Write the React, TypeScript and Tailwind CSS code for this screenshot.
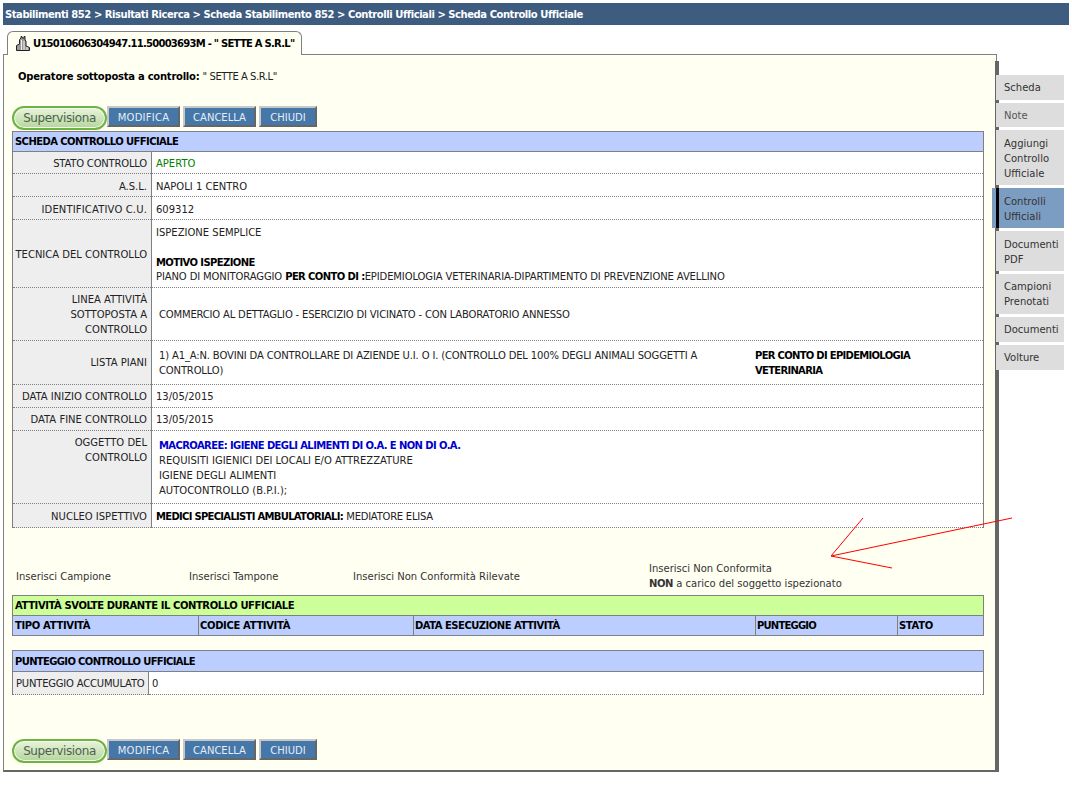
import React from "react";

const font = { fontFamily: '"DejaVu Sans", Verdana, sans-serif' };

function Buttons({ className = "" }: { className?: string }) {
  const btn =
    "h-[21px] border-2 border-t-[#c8c8c8] border-l-[#c8c8c8] border-r-[#666666] border-b-[#666666] bg-[#4577a8] pt-[2px] text-[10px] leading-none text-[#e8eef5]";
  return (
    <div className={`flex items-start ${className}`}>
      <button className="h-[24px] w-[95px] rounded-full border-2 border-[#6fb342] bg-gradient-to-b from-[#e8f4dc] to-[#b5d69c] text-[12px] leading-none tracking-[-0.4px] text-[#4f5f4f] shadow-[inset_0_0_0_1px_#f4faee]">
        Supervisiona
      </button>
      <button className={`${btn} w-[73px] tracking-[0.25px]`}>MODIFICA</button>
      <button className={`${btn} ml-[3px] w-[73px]`}>CANCELLA</button>
      <button className={`${btn} ml-[3px] w-[58px]`}>CHIUDI</button>
    </div>
  );
}

function Row({
  label,
  h,
  children,
}: {
  label: React.ReactNode;
  h: string;
  children: React.ReactNode;
}) {
  return (
    <tr className={`${h} border-b border-dotted border-[#808080]`}>
      <td className="whitespace-nowrap border-r border-solid border-[#808080] bg-[#eeeeee] py-0 pl-0 pr-1 text-right align-middle">
        {label}
      </td>
      <td className="bg-white px-1 align-middle">{children}</td>
    </tr>
  );
}

function SideTab({
  h,
  active,
  children,
}: {
  h: string;
  active?: boolean;
  children: React.ReactNode;
}) {
  return active ? (
    <div className={`relative -ml-[7px] mb-[3px] w-[72px] ${h} bg-[#7c9dc2] py-[6px] pl-[12px] leading-[15px]`}>
      <span className="absolute left-[4px] top-0 h-full w-[3px] bg-black" />
      {children}
    </div>
  ) : (
    <div className={`-ml-[3px] mb-[3px] w-[68px] ${h} bg-[#dddddd] py-[5px] pl-[8px] leading-[15px]`}>
      {children}
    </div>
  );
}

export default function App() {
  return (
    <div style={font} className="relative h-[786px] w-[1072px] overflow-hidden bg-white pt-[3px] text-[10px] text-[#222222]">
      <div className="ml-[3px] mr-[3px] flex h-[22px] items-center bg-[#3e5c80] pl-[2px] text-[10px] font-bold tracking-[-0.45px] text-white">
        Stabilimenti 852 &gt; Risultati Ricerca &gt; Scheda Stabilimento 852 &gt; Controlli Ufficiali &gt; Scheda Controllo Ufficiale
      </div>

      <div className="relative z-10 ml-[7px] mt-[6px] -mb-px flex h-[24px] w-[295px] items-center whitespace-nowrap rounded-t-[6px] border border-b-0 border-[#808080] bg-[#fffff2] pl-[7px] font-bold tracking-[-0.74px] text-black">
        <svg width="16" height="16" viewBox="0 0 16 16" className="mr-[2px] shrink-0">
          <path d="M1.5 14.5V9.5L4.5 8V3.5L6 2V.5h1V2H9V.5h1V4l1 1v5l3.5 1.5v3z" fill="#9a9a9a" stroke="#222" strokeWidth="1" />
          <path d="M6.5 4v10M9 5v9M12 11v3" stroke="#f0f0f0" strokeWidth="1" />
        </svg>
        U15010606304947.11.50003693M - " SETTE A S.R.L"
      </div>

      <div className="ml-[3px] flex items-start">
        <div className="h-[718px] w-[994px] shrink-0 border border-b-2 border-[#808080] border-b-[#666666] bg-[#fffff2] pl-[8px]">
          <div className="ml-[6px] pt-[14px] text-black">
            <b className="tracking-[-0.25px]">Operatore sottoposta a controllo:</b> <span className="tracking-[-0.45px] text-[#222222]">" SETTE A S.R.L"</span>
          </div>
          <Buttons className="mt-[22px]" />

          <table className="mt-px w-[972px] table-fixed border-collapse border-x border-[#808080]">
            <colgroup>
              <col className="w-[139px]" />
              <col />
            </colgroup>
            <thead>
              <tr className="h-[20px] border-y border-[#808080] bg-[#bbceff] text-left text-black">
                <th colSpan={2} className="pl-[2px] font-bold tracking-[-0.58px]">SCHEDA CONTROLLO UFFICIALE</th>
              </tr>
            </thead>
            <tbody>
              <Row label={<span className="block pt-px tracking-[-0.2px]">STATO CONTROLLO</span>} h="h-[22px]"><span className="block pt-px text-[#008000]">APERTO</span></Row>
              <Row label={<span className="block pt-[2px]">A.S.L.</span>} h="h-[23px]"><span className="block pt-[2px]">NAPOLI 1 CENTRO</span></Row>
              <Row label={<span className="block pt-[2px] tracking-[0.15px]">IDENTIFICATIVO C.U.</span>} h="h-[23px]"><span className="block pt-[2px]">609312</span></Row>
              <Row label={<span className="block pt-[2px]">TECNICA DEL CONTROLLO</span>} h="h-[68px]">
                <div className="pt-[2px] leading-[15px]">
                  ISPEZIONE SEMPLICE
                  <br />
                  <br />
                  <b className="tracking-[-0.6px] text-black">MOTIVO ISPEZIONE</b>
                  <span className="-mt-px block">
                    <span className="tracking-[-0.12px]">PIANO DI MONITORAGGIO </span><b className="tracking-[-0.6px] text-black">PER CONTO DI :</b><span className="tracking-[-0.12px]">EPIDEMIOLOGIA VETERINARIA-DIPARTIMENTO DI PREVENZIONE AVELLINO</span>
                  </span>
                </div>
              </Row>
              <Row label={<span className="block leading-[15px]">LINEA ATTIVITÀ<br />SOTTOPOSTA A<br />CONTROLLO</span>} h="h-[53px]">
                <span className="pl-[3px] tracking-[-0.18px]">COMMERCIO AL DETTAGLIO - ESERCIZIO DI VICINATO - CON LABORATORIO ANNESSO</span>
              </Row>
              <Row label="LISTA PIANI" h="h-[44px]">
                <div className="flex leading-[15px]">
                  <div className="w-[599px] pr-[50px] pl-[3px] tracking-[-0.15px]">
                    1) A1_A:N. BOVINI DA CONTROLLARE DI AZIENDE U.I. O I. (CONTROLLO DEL 100% DEGLI ANIMALI SOGGETTI A CONTROLLO)
                  </div>
                  <b className="w-[190px] tracking-[-0.7px] text-black">PER CONTO DI EPIDEMIOLOGIA VETERINARIA</b>
                </div>
              </Row>
              <Row label="DATA INIZIO CONTROLLO" h="h-[23px]">13/05/2015</Row>
              <Row label="DATA FINE CONTROLLO" h="h-[23px]">13/05/2015</Row>
              <tr className="h-[73px] border-b border-dotted border-[#808080]">
                <td className="border-r border-solid border-[#808080] bg-[#eeeeee] pl-1 pr-1 pt-[4px] text-right align-top leading-[15px]">
                  OGGETTO DEL<br />CONTROLLO
                </td>
                <td className="bg-white pl-[7px] pt-[7px] align-top leading-[15px]">
                  <b className="tracking-[-0.6px] text-[#0000cc]">MACROAREE: IGIENE DEGLI ALIMENTI DI O.A. E NON DI O.A.</b>
                  <br />
                  REQUISITI IGIENICI DEI LOCALI E/O ATTREZZATURE
                  <br />
                  IGIENE DEGLI ALIMENTI
                  <br />
                  AUTOCONTROLLO (B.P.I.);
                </td>
              </tr>
              <Row label={<span className="block pt-px">NUCLEO ISPETTIVO</span>} h="h-[24px]">
                <span className="block pt-px">
                  <b className="tracking-[-0.7px] text-black">MEDICI SPECIALISTI AMBULATORIALI:</b> <span className="tracking-[-0.25px]">MEDIATORE ELISA</span>
                </span>
              </Row>
            </tbody>
          </table>

          <div className="mt-[31px] flex h-[35px] items-center text-[#333333]">
            <span className="ml-[4px] w-[173px]">Inserisci Campione</span>
            <span className="w-[164px]">Inserisci Tampone</span>
            <span className="w-[296px]">Inserisci Non Conformità Rilevate</span>
            <span className="pb-[2px] leading-[15px]">
              Inserisci Non Conformita
              <br />
              <b className="tracking-[-0.4px]">NON</b> a carico del soggetto ispezionato
            </span>
          </div>

          <table className="mt-px w-[972px] table-fixed border-collapse border border-[#808080] font-bold text-black">
            <colgroup>
              <col className="w-[186px]" />
              <col className="w-[215px]" />
              <col className="w-[342px]" />
              <col className="w-[142px]" />
              <col />
            </colgroup>
            <tbody>
              <tr className="h-[20px] border-b border-[#808080] bg-[#ccff99]">
                <td colSpan={5} className="pl-[2px] tracking-[-0.42px]">ATTIVITÀ SVOLTE DURANTE IL CONTROLLO UFFICIALE</td>
              </tr>
              <tr className="h-[20px] bg-[#bbceff] tracking-[-0.35px]">
                <td className="border-r border-[#808080] pl-[2px]">TIPO ATTIVITÀ</td>
                <td className="border-r border-[#808080] pl-[1px]">CODICE ATTIVITÀ</td>
                <td className="border-r border-[#808080] pl-[1px] tracking-[-0.5px]">DATA ESECUZIONE ATTIVITÀ</td>
                <td className="border-r border-[#808080] pl-[1px] tracking-[-0.8px]">PUNTEGGIO</td>
                <td className="pl-[1px]">STATO</td>
              </tr>
            </tbody>
          </table>

          <table className="mt-[14px] w-[972px] table-fixed border-collapse border-x border-[#808080]">
            <colgroup>
              <col className="w-[136px]" />
              <col />
            </colgroup>
            <tbody>
              <tr className="h-[21px] border-y border-[#808080] bg-[#bbceff] font-bold text-black">
                <td colSpan={2} className="pl-[2px] tracking-[-0.65px]">PUNTEGGIO CONTROLLO UFFICIALE</td>
              </tr>
              <tr className="h-[23px] border-b border-dotted border-[#808080]">
                <td className="whitespace-nowrap border-r border-solid border-[#808080] bg-[#eeeeee] pl-[3px] tracking-[-0.2px]">PUNTEGGIO ACCUMULATO</td>
                <td className="bg-white pl-[3px]">0</td>
              </tr>
            </tbody>
          </table>

          <Buttons className="mt-[44px]" />
        </div>

        <div className="-ml-[2px] mt-[7px] h-[711px] w-[73px] border-l-4 border-[#666666] pt-[14px] text-[#333333]">
          <SideTab h="h-[25px]">Scheda</SideTab>
          <SideTab h="h-[24px]"><span className="text-[#555555]">Note</span></SideTab>
          <SideTab h="h-[55px] pt-[6px]">Aggiungi<br />Controllo<br />Ufficiale</SideTab>
          <SideTab h="h-[40px]" active>Controlli<br />Ufficiali</SideTab>
          <SideTab h="h-[40px] pt-[6px]">Documenti<br />PDF</SideTab>
          <SideTab h="h-[40px]">Campioni<br />Prenotati</SideTab>
          <SideTab h="h-[25px]">Documenti</SideTab>
          <SideTab h="h-[25px]">Volture</SideTab>
        </div>
      </div>

      <svg className="pointer-events-none absolute left-0 top-0 z-20" width="1072" height="786">
        <path d="M863 518L831 556M1012 518L831 556L892 568" fill="none" stroke="#ff0000" strokeWidth="1" />
      </svg>
    </div>
  );
}
